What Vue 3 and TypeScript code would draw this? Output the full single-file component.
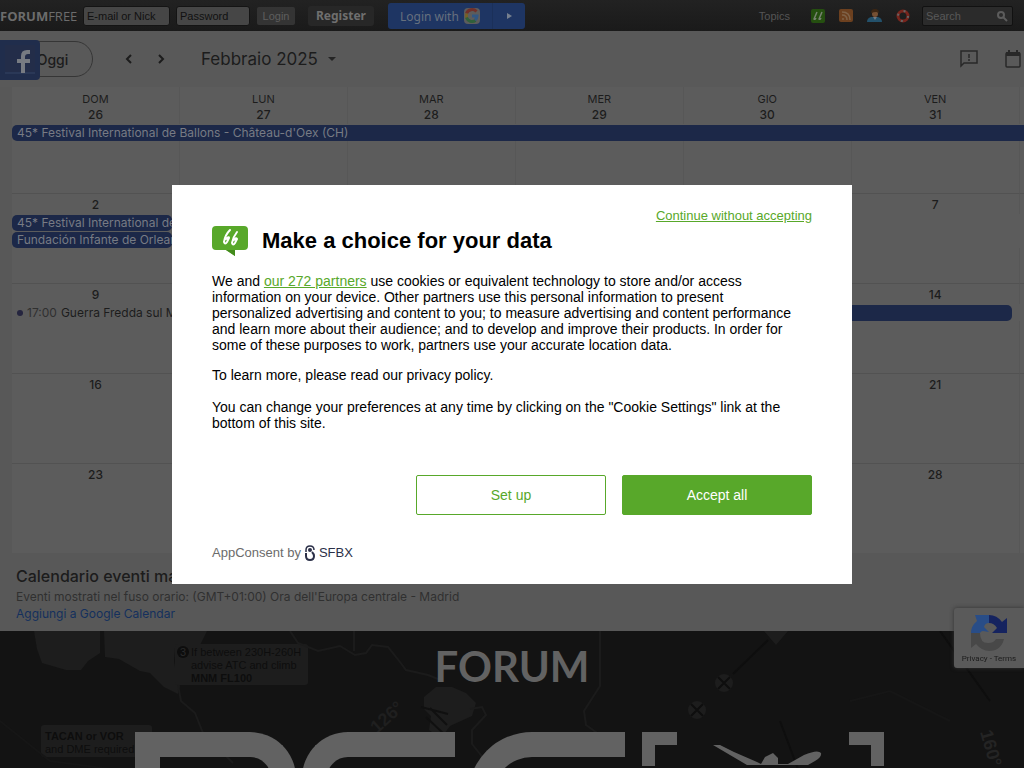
<script setup lang="ts">
interface CalendarItem {
  span: number
  text?: string
  time?: string
  kind: 'bar' | 'timed' | 'empty'
  open?: boolean
}
interface Week {
  days: number[]
  rows: CalendarItem[][]
}

const dayNames: string[] = ['DOM', 'LUN', 'MAR', 'MER', 'GIO', 'VEN', 'SAB']

const weeks: Week[] = [
  {
    days: [26, 27, 28, 29, 30, 31, 1],
    rows: [[{ span: 7, kind: 'bar', open: true, text: "45* Festival International de Ballons - Château-d'Oex (CH)" }]],
  },
  {
    days: [2, 3, 4, 5, 6, 7, 8],
    rows: [
      [
        { span: 1, kind: 'bar', text: "45* Festival International de Ballons - Château-d'Oex (CH)" },
        { span: 6, kind: 'empty' },
      ],
      [
        { span: 1, kind: 'bar', text: 'Fundación Infante de Orleans' },
        { span: 6, kind: 'empty' },
      ],
    ],
  },
  {
    days: [9, 10, 11, 12, 13, 14, 15],
    rows: [
      [
        { span: 1, kind: 'timed', time: '17:00', text: 'Guerra Fredda sul Mare' },
        { span: 3, kind: 'empty' },
        { span: 2, kind: 'bar' },
        { span: 1, kind: 'empty' },
      ],
    ],
  },
  { days: [16, 17, 18, 19, 20, 21, 22], rows: [] },
  { days: [23, 24, 25, 26, 27, 28, 1], rows: [] },
]
</script>

<template>
  <div class="page">
    <header class="topbar">
      <a class="brand" href="#"><b>FORUM</b>FREE</a>
      <input class="field email" type="text" aria-label="E-mail or Nick" placeholder="E-mail or Nick" />
      <input class="field pass" type="password" aria-label="Password" placeholder="Password" />
      <button class="login" type="button">Login</button>
      <a class="register" href="#">Register</a>
      <div class="social">
        <button class="social-main" type="button">
          Login with
          <svg width="18" height="18" viewBox="0 0 18 18" aria-hidden="true">
            <rect x="1" y="1" width="16" height="16" rx="4" fill="#5c5c5c" />
            <g fill="none" stroke-width="3">
              <path d="M3.500 6.500a6 6 0 0 1 10-2" stroke="#713029" />
              <path d="M3.500 11V6.500" stroke="#756028" />
              <path d="M3.500 10.500a6 6 0 0 0 9 3" stroke="#30603b" />
              <path d="M9 9h5a5 5 0 0 1-2 4" stroke="#315783" />
            </g>
          </svg>
        </button>
        <button class="social-more" type="button" aria-label="More login options">
          <svg width="6" height="8" viewBox="0 0 6 8"><path d="M1 1l5 3-5 3z" fill="#76808f" /></svg>
        </button>
      </div>
      <nav class="topnav">
        <a class="topics" href="#">Topics</a>
        <a href="#" aria-label="Forum">
          <svg width="14" height="14" viewBox="0 0 14 14">
            <rect width="14" height="14" rx="2" fill="#254f10" />
            <path d="M6 3L3 10q1 1 2-1M11 3L8 10q1 1 2-1" fill="none" stroke="#778271" stroke-width="1.500" />
          </svg>
        </a>
        <a href="#" aria-label="Feed">
          <svg width="14" height="14" viewBox="0 0 14 14">
            <rect width="14" height="13" rx="2" fill="#6c401f" />
            <path d="M3 3q8 0 8 8M3 6q5 0 5 5" fill="none" stroke="#7f6248" stroke-width="1.500" />
            <circle cx="4" cy="10" r="1" fill="#7f6248" />
          </svg>
        </a>
        <a href="#" aria-label="Users">
          <svg width="15" height="14" viewBox="0 0 15 14">
            <path d="M0 13q0-4 4-5h7q4 1 4 5z" fill="#23516b" />
            <path d="M6 8l2 3 2-3z" fill="#727980" />
            <circle cx="8" cy="5" r="3" fill="#765033" />
            <path d="M4 4q0-4 4-4t4 4q-2-2-8 0" fill="#3d2613" />
          </svg>
        </a>
        <a href="#" aria-label="Help">
          <svg width="14" height="14" viewBox="0 0 14 14">
            <circle cx="7" cy="7" r="5" fill="none" stroke="#78251d" stroke-width="3" />
            <circle cx="7" cy="7" r="5" fill="none" stroke="#666" stroke-width="2" stroke-dasharray="2 5.850" />
          </svg>
        </a>
      </nav>
      <label class="search">
        <input type="search" aria-label="Search" placeholder="Search" />
        <svg width="12" height="12" viewBox="0 0 12 12" aria-hidden="true">
          <circle cx="5" cy="5" r="3" fill="none" stroke="#5c5c5c" stroke-width="2" />
          <path d="M7 7l4 4" stroke="#5c5c5c" stroke-width="2" />
        </svg>
      </label>
    </header>

    <section class="toolbar">
      <button class="today" type="button">Oggi</button>
      <button class="step" type="button" aria-label="Previous">
        <svg width="10" height="12" viewBox="0 0 10 12"><path d="M7 2L3 6l4 4" fill="none" stroke="#1c1c1c" stroke-width="2" /></svg>
      </button>
      <button class="step" type="button" aria-label="Next">
        <svg width="10" height="12" viewBox="0 0 10 12"><path d="M3 2l4 4-4 4" fill="none" stroke="#1c1c1c" stroke-width="2" /></svg>
      </button>
      <button class="month" type="button">
        Febbraio 2025
        <svg width="8" height="4" viewBox="0 0 8 4"><path d="M0 0h8L4 4z" fill="#252525" /></svg>
      </button>
      <div class="tools">
        <button type="button" aria-label="Feedback">
          <svg width="18" height="18" viewBox="0 0 18 18">
            <path d="M1 16V1h16v12H4z" fill="none" stroke="#282828" stroke-width="1.500" />
            <path d="M9 4v4M9 9v2" stroke="#282828" stroke-width="1.500" />
          </svg>
        </button>
        <button type="button" aria-label="Calendar view">
          <svg width="16" height="18" viewBox="0 0 16 18">
            <rect x="1" y="3" width="14" height="14" rx="1" fill="none" stroke="#282828" stroke-width="1.500" />
            <path d="M1 2h14v4H1zM3 0h2v4H3zM11 0h2v4h-2z" fill="#282828" />
          </svg>
        </button>
      </div>
    </section>

    <main class="calendar">
      <table class="month-grid">
        <thead>
          <tr>
            <th v-for="name in dayNames" :key="name" scope="col">{{ name }}</th>
          </tr>
        </thead>
        <tbody v-for="(week, w) in weeks" :key="w" :class="{ first: w === 0 }">
          <tr class="dates">
            <td v-for="(day, d) in week.days" :key="d">{{ day }}</td>
          </tr>
          <tr v-for="(row, r) in week.rows" :key="r" class="events">
            <td v-for="(item, i) in row" :key="i" :colspan="item.span">
              <div v-if="item.kind === 'bar'" class="bar" :class="{ open: item.open }">{{ item.text }}</div>
              <div v-else-if="item.kind === 'timed'" class="timed">
                <i></i><span>{{ item.time }}</span>{{ item.text }}
              </div>
            </td>
          </tr>
          <tr class="rest" :class="'used-' + week.rows.length">
            <td v-for="(day, d) in week.days" :key="d"></td>
          </tr>
        </tbody>
      </table>
    </main>

    <section class="calendar-info">
      <h2>Calendario eventi manifestazioni</h2>
      <p>Eventi mostrati nel fuso orario: (GMT+01:00) Ora dell'Europa centrale - Madrid</p>
      <a href="#">Aggiungi a Google Calendar</a>
    </section>

    <section class="hero">
      <svg class="map" width="1024" height="138" viewBox="0 0 1024 138" aria-hidden="true">
        <g fill="#1d1d1d">
          <path d="M34 0h66v22l-12 8-7 9H66l-24-7-5-14zM104 0h103l-7 14-25 3-1 13 3 20 3 5-2 8-14-7-14-14-10-2-21-12-14-2z" />
          <path d="M424 66l12-10h16l14 6 10 10-4 13-22 10-9 12-12-8 2-14-7-7z" />
          <rect x="175" y="13" width="133" height="41" rx="3" />
          <rect x="41" y="94" width="111" height="32" rx="3" />
          <circle cx="724" cy="52" r="9" /><circle cx="697" cy="79" r="9" /><path d="M764 0h24l-12 14z" />
        </g>
        <g fill="none" stroke="#1b1b1b" stroke-width="2">
          <path d="M178 54l3 16 14 12 8 20 30 30M290 0l8 12 20 8 22-5 15 9 11-2 6-8 16 2 12 15 6 8 22 5 10 4M354 0v20M470 78l12-2 4 8-14 15v14l12 15M600 0v55l-16 25 2 14 14 10 20 3" />
          <path d="M718 46l12 12m0-12l-12 12M691 73l12 12m0-12l-12 12M733 43l35-34M780 90l18 48M940 0l50 70" stroke="#0e0e0e" />
          <path d="M430 77l17 17M421 76l27 7M426 86l19 18" stroke="#101010" />
          <path d="M0 90l50 40 60 8M850 70l40-10 60 30" stroke="#161616" />
        </g>
        <circle cx="183" cy="21" r="6" fill="#0d0d0d" />
        <text x="180" y="25" class="map-note" fill="#2a2a2a">3</text>
        <g class="map-note" fill="#0d0d0d">
          <text x="191" y="25">If between 230H-260H</text>
          <text x="191" y="38">advise ATC and climb</text>
          <text x="191" y="51" class="strong">MNM FL100</text>
          <text x="45" y="109" class="strong">TACAN or VOR</text>
          <text x="45" y="122">and DME required</text>
        </g>
        <text transform="translate(377 103) rotate(-42)" fill="#1f1f1f" class="map-big">126°</text>
        <text transform="translate(980 101) rotate(74)" fill="#242424" class="map-big">160°</text>
      </svg>
      <h1>FORUM</h1>
      <div class="mark" aria-hidden="true">
        <span class="shape round-right"></span>
        <span class="shape round-left"></span>
        <span class="shape wide-left"></span>
        <span class="bracket left"></span>
        <svg class="plane" width="172" height="36" viewBox="0 0 172 36">
          <path d="M36 13h7l14 7 23 10 4 2 4-7 8-4 5 5v6h10l16-9q14-6 17-2 1 4-6 8l-7 4H70z" fill="#626262" />
        </svg>
        <span class="bracket right"></span>
      </div>
    </section>

    <a class="facebook" href="#" aria-label="Facebook">
      <svg width="32" height="32" viewBox="0 0 32 32">
        <rect x="1" y="0" width="30" height="28" fill="#232d49" />
        <path d="M1 27h30v2H1z" fill="#2a3857" />
        <path d="M17 28V18h-4v-4h4v-3q0-6 6-6h3v4h-2q-3 0-3 3v2h5v4h-5v10z" fill="#777b82" />
      </svg>
    </a>

    <aside class="captcha">
      <svg width="38" height="38" viewBox="0 0 38 38" aria-hidden="true">
        <path d="M37 4v15H22l5-5q-3-5-8-5V1q8 0 13 7z" fill="#15235f" />
        <path d="M5 1h14v8q-4 0-5 4l5 5-6-1q-2 0-3 2H1q0-7 6-12z" fill="#294d87" />
        <path d="M1 34V19h9q0 10 8 10 6 0 8-4h8q-3 12-15 12-7 0-13-7z" fill="#484848" />
      </svg>
      <div><a href="#">Privacy</a> - <a href="#">Terms</a></div>
    </aside>

    <div class="backdrop">
      <section class="dialog" role="dialog" aria-modal="true" aria-labelledby="consent-title">
        <a class="skip" href="#">Continue without accepting</a>
        <div class="title">
          <svg width="36" height="32" viewBox="0 0 36 32" aria-hidden="true">
            <path d="M4 1h28q4 0 4 4v16q0 4-4 4H23v6l-9-6H4q-4 0-4-4V5q0-4 4-4z" fill="#58a82a" />
            <path d="M14 25h9v6z" fill="#438b1c" />
            <g fill="none" stroke="#fff" stroke-width="2" stroke-linecap="round">
              <path d="M18 5q-5 5-6 12 1 3 3 0l2-4q0-2-3 1M25 7q-4 5-5 11 1 3 3 0l2-4q-1-2-3 1" />
            </g>
          </svg>
          <h2 id="consent-title">Make a choice for your data</h2>
        </div>
        <p class="intro">
          We and <a href="#">our 272 partners</a> use cookies or equivalent technology to store and/or access
          information on your device. Other partners use this personal information to present personalized
          advertising and content to you; to measure advertising and content performance and learn more about their
          audience; and to develop and improve their products. In order for some of these purposes to work, partners
          use your accurate location data.
        </p>
        <p>To learn more, please read our privacy policy.</p>
        <p>
          You can change your preferences at any time by clicking on the "Cookie Settings" link at the bottom of this
          site.
        </p>
        <div class="actions">
          <button class="setup" type="button">Set up</button>
          <button class="accept" type="button">Accept all</button>
        </div>
        <div class="provider">
          AppConsent by
          <svg width="10" height="16" viewBox="0 0 10 16" aria-hidden="true">
            <path d="M1 7V5q0-4 4-4t4 4" fill="none" stroke="#2b3048" stroke-width="1.500" />
            <circle cx="5" cy="5" r="2" fill="#2b3048" />
            <path d="M1 8v3q0 4 4 4t4-4q0-2-2-4" fill="none" stroke="#2b3048" stroke-width="2" />
          </svg>
          <a href="#">SFBX</a>
        </div>
      </section>
    </div>
  </div>
</template>

<style>
body {
  margin: 0;
  overflow: hidden;
}
</style>

<style scoped>
* {
  box-sizing: border-box;
}
.page {
  display: flex;
  flex-direction: column;
  height: 100vh;
  overflow: hidden;
  background: #585858;
  font-family: Inter, sans-serif;
  font-size: 12px;
  color: #1c1c1c;
}
button {
  border: 0;
  padding: 0;
  background: none;
  font: inherit;
  color: inherit;
}
svg {
  display: block;
  flex: none;
}
a {
  text-decoration: none;
}

.topbar {
  display: flex;
  align-items: center;
  flex: none;
  height: 31px;
  padding-top: 1px;
  background: linear-gradient(#222, #1a1a1a);
  font-family: "Liberation Sans", Arial, sans-serif;
  font-size: 11px;
}
.brand {
  width: 83px;
  font-family: "Open Sans", sans-serif;
  font-size: 13px;
  color: #6c6c6c;
}
.field {
  height: 20px;
  border: 1px solid #141414;
  border-radius: 3px;
  padding: 0 3px;
  background: #464646;
  font: inherit;
}
.field::placeholder {
  color: #111;
  opacity: 1;
}
.email {
  width: 87px;
}
.pass {
  width: 74px;
  margin-left: 6px;
}
.login {
  width: 38px;
  height: 18px;
  margin-left: 7px;
  border-radius: 2px;
  background: #343434;
  color: #5e5e5e;
}
.register {
  margin-left: 13px;
  padding: 0 8px;
  border-radius: 3px;
  background: #272727;
  line-height: 20px;
  font-family: "Noto Sans", sans-serif;
  font-size: 12px;
  font-weight: bold;
  color: #6f6f6f;
}
.social {
  display: flex;
  height: 26px;
  margin-left: 14px;
  border-radius: 3px;
  background: #1e3563;
  color: #66707e;
}
.social-main {
  display: flex;
  align-items: center;
  gap: 4px;
  width: 105px;
  padding-left: 12px;
  border-right: 1px solid #1b3059;
  font-family: "Noto Sans", sans-serif;
  font-size: 12px;
  white-space: nowrap;
}
.social-more {
  display: flex;
  align-items: center;
  justify-content: center;
  width: 32px;
}
.topnav {
  display: flex;
  align-items: center;
  gap: 14px;
  margin-left: auto;
}
.topics {
  margin-right: 7px;
  color: #555;
}
.search {
  display: flex;
  align-items: center;
  width: 91px;
  height: 20px;
  margin: 0 11px 0 12px;
  padding: 0 4px 0 3px;
  border: 1px solid #111;
  border-radius: 2px;
  background: #2b2b2b;
}
.search input {
  flex: 1;
  min-width: 0;
  border: 0;
  padding: 0;
  background: none;
  font: inherit;
}
.search input::placeholder {
  color: #585858;
  opacity: 1;
}

.toolbar {
  display: flex;
  align-items: center;
  flex: none;
  height: 56px;
  padding-left: 12px;
  background: #595959;
}
.today {
  width: 81px;
  height: 36px;
  border: 1px solid #363636;
  border-radius: 18px;
  font-size: 14px;
  font-weight: 500;
}
.step {
  display: flex;
  justify-content: center;
  width: 32px;
}
.today + .step {
  margin-left: 20px;
}
.month {
  display: flex;
  align-items: center;
  gap: 10px;
  margin-left: 24px;
  font-size: 17px;
  white-space: nowrap;
}
.tools {
  display: flex;
  align-items: center;
  gap: 27px;
  margin-left: auto;
  padding-right: 3px;
}

.calendar {
  flex: none;
  padding-left: 12px;
  overflow: hidden;
}
.month-grid {
  width: calc(700% / 6 - 5px);
  table-layout: fixed;
  border-collapse: separate;
  border-spacing: 0;
  background: #5c5c5c;
}
.month-grid th,
.month-grid td {
  padding: 0;
  border-right: 1px solid #575757;
  text-align: center;
}
.month-grid th {
  height: 20px;
  padding-top: 5px;
  line-height: 15px;
  font-size: 11px;
  font-weight: 400;
}
.dates td {
  height: 21px;
  border-top: 1px solid #525252;
  font-weight: 500;
}
.first .dates td {
  height: 17px;
  padding-bottom: 2px;
  border-top: 0;
  line-height: 15px;
}
.month-grid .events td {
  height: 17px;
  padding-top: 1px;
  border-right: 0;
  text-align: left;
  line-height: 16px;
  white-space: nowrap;
}
.bar {
  height: 16px;
  margin-right: 8px;
  padding-left: 5px;
  border-radius: 5px;
  overflow: hidden;
  background: #1c2848;
  color: #777b84;
}
.bar.open {
  margin-right: 0;
}
.timed {
  display: flex;
  align-items: center;
  height: 16px;
  padding-left: 5px;
  overflow: hidden;
}
.timed i {
  flex: none;
  width: 6px;
  height: 6px;
  border-radius: 50%;
  background: #25253f;
}
.timed span {
  margin: 0 4px;
  color: #303030;
}
.rest td {
  height: 69px;
}
.used-1 td {
  height: 52px;
}
.used-2 td {
  height: 35px;
}

.calendar-info {
  flex: none;
  height: 78px;
  padding: 13px 16px 0;
  line-height: 18px;
}
.calendar-info h2 {
  margin: 0 0 2px;
  line-height: 20px;
  font-size: 16px;
  font-weight: 500;
}
.calendar-info p {
  margin: 0;
  color: #303030;
}
.calendar-info a {
  display: block;
  line-height: 16px;
  color: #14305d;
}

.hero {
  position: relative;
  flex: 1;
  overflow: hidden;
  background: #131313;
}
.map {
  position: absolute;
  inset: 0;
}
.map-note {
  font: 11px "Liberation Sans", Arial, sans-serif;
}
.strong {
  font-weight: bold;
}
.map-big {
  font: bold 18px "Liberation Sans", Arial, sans-serif;
}
.hero h1 {
  position: relative;
  margin: 0;
  padding-top: 15px;
  line-height: 40px;
  font-family: Lato, sans-serif;
  font-size: 42px;
  font-weight: bold;
  text-align: center;
  color: #626262;
}
.mark {
  position: relative;
  display: flex;
  justify-content: center;
  margin-top: 46px;
  padding-right: 5px;
}
.shape {
  height: 160px;
  border: 0 solid #626262;
  border-top-width: 25px;
}
.round-right {
  width: 161px;
  border-left-width: 25px;
  border-right-width: 25px;
  border-top-right-radius: 46px;
}
.round-left {
  width: 153px;
  margin-left: 6px;
  border-left-width: 25px;
  border-top-left-radius: 46px;
}
.wide-left {
  width: 157px;
  margin-left: 13px;
  border-left-width: 25px;
  border-top-left-radius: 64px;
}
.bracket {
  width: 35px;
  height: 34px;
  border: 0 solid #626262;
  border-top-width: 13px;
}
.bracket.left {
  margin-left: 17px;
  border-left-width: 13px;
}
.bracket.right {
  border-right-width: 13px;
}

.facebook {
  position: fixed;
  top: 40px;
  left: 0;
  width: 40px;
  height: 40px;
  padding: 5px 0 0 4px;
  border-radius: 0 4px 4px 0;
  background: #202d4c;
}
.captcha {
  position: fixed;
  top: 608px;
  right: 0;
  display: flex;
  flex-direction: column;
  align-items: center;
  gap: 2px;
  width: 70px;
  height: 60px;
  padding-top: 6px;
  border-radius: 3px 0 0 3px;
  background: #5a5a5a;
  box-shadow: 0 0 4px #333;
  font: 8px/10px Roboto, sans-serif;
  white-space: nowrap;
}
.captcha a {
  color: inherit;
}

.backdrop {
  position: fixed;
  inset: 0;
  display: flex;
  align-items: center;
  justify-content: center;
}
.dialog {
  display: flex;
  flex-direction: column;
  width: 680px;
  max-width: 100%;
  padding: 23px 40px;
  background: #fff;
  font: 14px/16px "Liberation Sans", Arial, sans-serif;
  color: #000;
}
.skip {
  align-self: flex-end;
  font-size: 13px;
}
.dialog .skip,
.dialog p a {
  color: #58a82a;
  text-decoration: underline;
}
.title {
  display: flex;
  align-items: center;
  gap: 14px;
  height: 34px;
  margin-bottom: 15px;
}
.title h2 {
  margin: 0;
  line-height: 26px;
  font-size: 22px;
}
.dialog p {
  margin: 0 0 16px;
  padding-right: 10px;
}
.dialog .intro {
  margin-bottom: 14px;
}
.actions {
  display: flex;
  justify-content: flex-end;
  gap: 16px;
  margin-top: 28px;
}
.actions button {
  width: 190px;
  height: 40px;
  border: 1px solid #58a82a;
  border-radius: 2px;
}
.setup {
  background: #fff;
  color: #58a82a;
}
.accept {
  background: #58a82a;
  color: #fff;
}
.provider {
  display: flex;
  align-items: center;
  gap: 4px;
  margin-top: 30px;
  font-size: 13px;
  color: #6b6b6b;
}
.provider a {
  color: #2b3048;
}
</style>
